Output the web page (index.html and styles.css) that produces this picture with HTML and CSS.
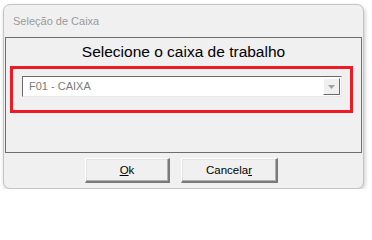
FILE: index.html
```html
<!DOCTYPE html>
<html>
<head>
<meta charset="utf-8">
<link rel="stylesheet" href="styles.css">
</head>
<body>
<div class="window">
  <div class="titlebar">Seleção de Caixa</div>
  <div class="panel">
    <div class="heading">Selecione o caixa de trabalho</div>
    <div class="highlight">
      <div class="combo">
        <div class="combo-text">F01 - CAIXA</div>
        <div class="combo-btn">
          <svg width="7" height="4" viewBox="0 0 7 4"><path d="M0 0H7L3.5 4Z" fill="#a0a0a0"/></svg>
        </div>
      </div>
    </div>
  </div>
  <div class="buttons">
    <button class="btn btn-ok"><u>O</u>k</button>
    <button class="btn btn-cancel">Cancela<u>r</u></button>
  </div>
</div>
</body>
</html>
```

FILE: styles.css
```css
* { box-sizing: border-box; }
html, body { margin: 0; padding: 0; background: #ffffff; }
body { font-family: "Liberation Sans", Arial, sans-serif; }

.window {
  margin: 4px 0 0 3px;
  width: 361px;
  height: 185px;
  border: 1px solid #c4c4c4;
  border-radius: 7px;
  background: #f0f0f0;
  box-shadow: 1px 2px 4px rgba(0,0,0,0.22);
  display: flex;
  flex-direction: column;
}

.titlebar {
  height: 32px;
  padding-left: 9px;
  font-size: 11px;
  line-height: 32px;
  color: #9a9a9a;
}

.panel {
  margin: 0 1px;
  height: 116px;
  border: 1px solid #6e6e6e;
  display: flex;
  flex-direction: column;
}

.heading {
  margin-top: 4px;
  height: 20px;
  line-height: 20px;
  text-align: center;
  font-size: 15.5px;
  color: #000;
}

.highlight {
  margin: 4px 8px 0 4px;
  height: 47px;
  border: 3px solid #ed1c24;
  padding: 7px 8px 0 9px;
}

.combo {
  height: 21px;
  display: flex;
  background: #ffffff;
  border-top: 1px solid #6a6a6a;
  border-left: 1px solid #6a6a6a;
  border-right: 1px solid #e8e8e8;
  border-bottom: 1px solid #e8e8e8;
  padding: 1px;
}

.combo-text {
  flex: 1;
  padding-left: 5px;
  font-size: 11px;
  line-height: 17px;
  color: #7a7a7a;
}

.combo-btn {
  width: 17px;
  background: #f0f0f0;
  border-top: 1px solid #ffffff;
  border-left: 1px solid #ffffff;
  border-right: 1px solid #6a6a6a;
  border-bottom: 1px solid #6a6a6a;
  display: flex;
  align-items: center;
  justify-content: center;
}

.buttons {
  margin-top: 5px;
  padding-left: 81px;
  display: flex;
  gap: 11px;
}

.btn {
  height: 25px;
  padding: 0;
  background: #f0f0f0;
  border-top: 1px solid #ffffff;
  border-left: 1px solid #ffffff;
  border-right: 2px solid #7a7a7a;
  border-bottom: 2px solid #7a7a7a;
  box-shadow: inset -1px -1px 0 #b0b0b0, inset 1px 1px 0 #e3e3e3;
  font-family: "Liberation Sans", Arial, sans-serif;
  font-size: 11.5px;
  color: #000;
}

.btn-ok { width: 85px; }
.btn-cancel { width: 97px; }
```
